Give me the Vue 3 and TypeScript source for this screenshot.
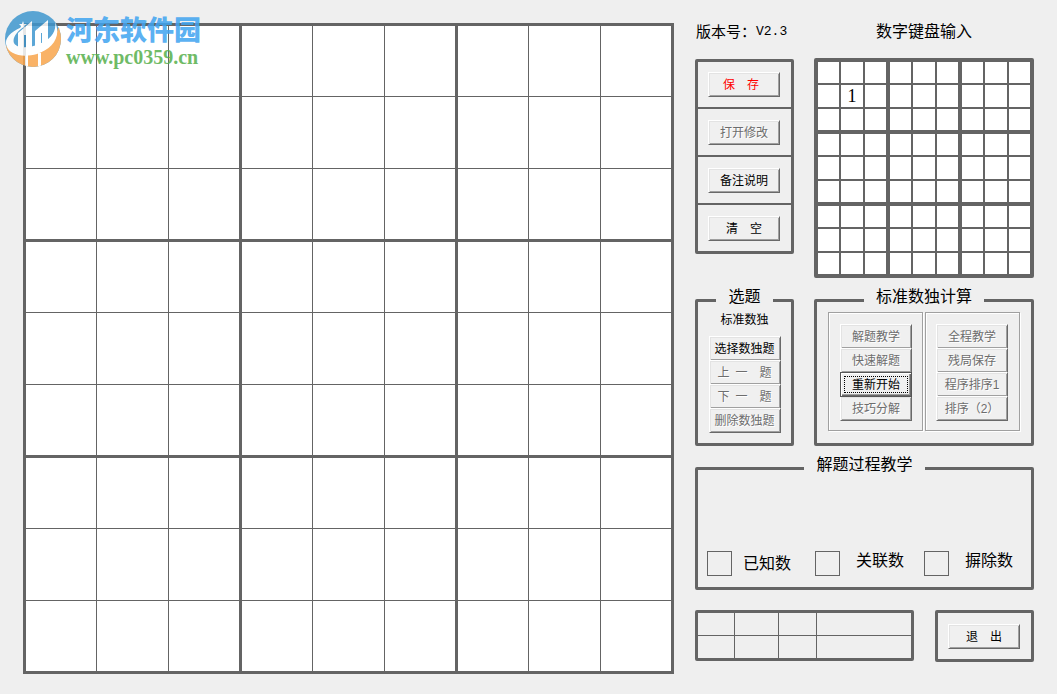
<script setup lang="ts">
import { ref } from 'vue'

interface Action {
  text: string
  disabled?: boolean
  tone?: 'danger'
  focused?: boolean
}

const nine = Array.from({ length: 9 }, (_, i) => i)

const keypad = ref<Record<string, string>>({ '0-4': '1' })

const fileActions: Action[] = [
  { text: '保\u3000存\u2002', tone: 'danger' },
  { text: '打开修改', disabled: true },
  { text: '备注说明' },
  { text: '清\u3000空' },
]

const puzzleActions: Action[] = [
  { text: '选择数独题' },
  { text: '上\u2002一\u3000题', disabled: true },
  { text: '下\u2002一\u3000题', disabled: true },
  { text: '删除数独题', disabled: true },
]

const solveGroups: Action[][] = [
  [
    { text: '解题教学', disabled: true },
    { text: '快速解题', disabled: true },
    { text: '重新开始', focused: true },
    { text: '技巧分解', disabled: true },
  ],
  [
    { text: '全程教学', disabled: true },
    { text: '残局保存', disabled: true },
    { text: '程序排序1', disabled: true },
    { text: '排序（2）', disabled: true },
  ],
]

const marks = ['已知数', '关联数', '摒除数']
</script>

<template>
  <main class="window">
    <div class="board">
      <div v-for="b in nine" :key="b" class="board-block">
        <div v-for="c in nine" :key="c" class="cell"></div>
      </div>
    </div>

    <div class="side">
      <div class="top">
        <div class="col">
          <p class="version">版本号：<span class="num">V2.3</span></p>
          <div class="menu">
            <div v-for="a in fileActions" :key="a.text" class="menu-row">
              <button type="button" class="btn" :class="a.tone" :disabled="a.disabled">{{ a.text }}</button>
            </div>
          </div>
        </div>
        <div class="col keypad-col">
          <h2 class="title">数字键盘输入</h2>
          <div class="keypad">
            <div v-for="b in nine" :key="b" class="keypad-block">
              <div v-for="c in nine" :key="c" class="cell key">{{ keypad[`${b}-${c}`] }}</div>
            </div>
          </div>
        </div>
      </div>

      <div class="groups">
        <fieldset class="panel pick">
          <legend>选题</legend>
          <p class="kind">标准数独</p>
          <div class="stack">
            <button v-for="a in puzzleActions" :key="a.text" type="button" class="btn" :disabled="a.disabled">{{ a.text }}</button>
          </div>
        </fieldset>
        <fieldset class="panel solve">
          <legend>标准数独计算</legend>
          <div class="solve-groups">
            <div v-for="(g, i) in solveGroups" :key="i" class="etched">
              <div class="stack">
                <button
                  v-for="a in g"
                  :key="a.text"
                  type="button"
                  class="btn"
                  :class="{ focused: a.focused }"
                  :disabled="a.disabled"
                >{{ a.text }}</button>
              </div>
            </div>
          </div>
        </fieldset>
      </div>

      <fieldset class="panel teach">
        <legend>解题过程教学</legend>
        <div class="marks">
          <div v-for="m in marks" :key="m" class="mark">
            <span class="swatch"></span>
            <span>{{ m }}</span>
          </div>
        </div>
      </fieldset>

      <div class="bottom">
        <table class="info">
          <colgroup>
            <col class="c1" />
            <col class="c2" />
            <col class="c3" />
            <col />
          </colgroup>
          <tbody>
            <tr v-for="r in 2" :key="r">
              <td v-for="c in 4" :key="c"></td>
            </tr>
          </tbody>
        </table>
        <div class="exit">
          <button type="button" class="btn">退&#x3000;出</button>
        </div>
      </div>
    </div>

    <div class="brand">
      <svg class="brand-mark" viewBox="0 0 56 56" width="56" height="56">
        <defs>
          <clipPath id="disc"><circle cx="28" cy="28" r="28" /></clipPath>
        </defs>
        <g clip-path="url(#disc)">
          <rect width="56" height="56" fill="#3f97cf" />
          <path d="M0 34C10 43 24 42 36 36C46 31 52 24 53 17L57 16V57H0Z" fill="#f8a54c" />
          <path d="M20 15C8 19 0 26 1 33C3 44 18 47 32 43C47 38 57 26 50 11C52 21 45 29 34 33C23 38 11 37 9 32C7 27 12 20 20 15Z" fill="#fff" />
          <path d="M13 22L27 10V38H21V24H19V39H13Z" fill="#fff" />
          <path d="M30 20L43 9V34H37V22H36V36H30Z" fill="#fff" />
          <path d="M20 44H23V57H20ZM33 42H36V57H33Z" fill="#fff" />
          <path d="M18 10L19 13L22 13L19 15L20 18L18 16L15 18L16 15L14 13L17 13Z" fill="#fff" />
        </g>
      </svg>
      <div class="brand-text">
        <span class="brand-name">河东软件园</span>
        <span class="brand-url">www.pc0359.cn</span>
      </div>
    </div>
  </main>
</template>

<style>
body {
  margin: 0;
  background: #efefef;
}
</style>

<style scoped>
.window {
  --line: #646464;
  position: relative;
  box-sizing: border-box;
  min-height: 100vh;
  padding: 23px 23px 20px;
  display: grid;
  grid-template-columns: minmax(0, 1fr) 339px;
  column-gap: 21px;
  align-items: start;
  background: #efefef;
  color: #000;
  font-family: "Liberation Sans", "Noto Sans CJK SC", sans-serif;
  font-size: 12px;
}

p,
h2 {
  margin: 0;
  font-weight: normal;
}

.board,
.keypad {
  box-sizing: border-box;
  display: grid;
  grid-template-columns: repeat(3, minmax(0, 1fr));
  grid-template-rows: repeat(3, minmax(0, 1fr));
  aspect-ratio: 1;
  background: var(--line);
}

.board {
  border: 3px solid var(--line);
  gap: 3px;
}

.keypad {
  border: 4px solid var(--line);
  border-radius: 2px;
  gap: 4px;
}

.board-block,
.keypad-block {
  display: grid;
  grid-template-columns: repeat(3, minmax(0, 1fr));
  grid-template-rows: repeat(3, minmax(0, 1fr));
  gap: 1px;
}

.keypad-block {
  gap: 2px;
}

.cell {
  background: #fff;
}

.key {
  display: flex;
  align-items: center;
  justify-content: center;
  font-family: "Liberation Serif", serif;
  font-size: 18px;
  line-height: 20px;
}

.top,
.groups {
  display: grid;
  grid-template-columns: 99px minmax(0, 1fr);
  column-gap: 20px;
}

.top {
  align-items: start;
}

.col {
  display: flex;
  flex-direction: column;
  gap: 18px;
}

.keypad-col {
  gap: 17px;
}

.version {
  display: flex;
  padding-left: 1px;
  font-size: 15px;
  line-height: 18px;
  white-space: nowrap;
}

.num {
  font-family: "Liberation Mono", monospace;
  font-size: 13px;
}

.title {
  font-size: 16px;
  line-height: 18px;
  text-align: center;
}

.menu {
  border: 3px solid var(--line);
  border-radius: 2px;
}

.menu-row {
  padding: 10px;
}

.menu-row + .menu-row {
  padding-top: 11px;
  border-top: 2px solid var(--line);
}

.btn {
  display: block;
  box-sizing: border-box;
  width: 72px;
  height: 25px;
  padding: 0;
  border: 1px solid;
  border-color: #fff #696969 #696969 #fff;
  border-radius: 0;
  background: #f0f0f0;
  box-shadow: inset 1px 1px #e3e3e3, inset -1px -1px #a0a0a0;
  color: #000;
  font: inherit;
  line-height: 16px;
  white-space: pre;
}

.btn:disabled {
  color: #6d6d6d;
  text-shadow: 1px 1px #fff;
}

.btn.danger {
  color: #f00;
}

.btn.focused {
  position: relative;
  border-color: #555;
  box-shadow: inset 1px 1px #fff, inset -1px -1px #696969, inset -2px -2px #a0a0a0;
  outline: 1px dotted #000;
  outline-offset: -5px;
}

.stack {
  display: flex;
  flex-direction: column;
  align-items: center;
}

.stack .btn + .btn {
  margin-top: -1px;
}

.groups {
  margin-top: 11px;
}

.panel {
  min-width: 0;
  margin: 0;
  padding: 0;
  border: 3px solid var(--line);
  border-radius: 2px;
}

.panel legend {
  margin: 0 auto;
  padding: 0 12px 6px;
  font-size: 16px;
  line-height: 16px;
}

.pick {
  padding: 1px 10px 10px;
}

.kind {
  margin-bottom: 8px;
  line-height: 16px;
  text-align: center;
}

.solve {
  padding: 1px 11px 12px;
}

.solve-groups {
  display: grid;
  grid-template-columns: 1fr 1fr;
  column-gap: 2px;
}

.etched {
  padding: 11px 10px 9px 11px;
  border: 1px solid #a0a0a0;
  box-shadow: inset 1px 1px #fff, 1px 1px #fff;
}

.etched + .etched {
  padding-right: 11px;
  padding-left: 10px;
}

.teach {
  margin-top: 11px;
  padding: 72px 9px 11px;
}

.marks {
  display: grid;
  grid-template-columns: 108px 109px 1fr;
}

.mark {
  display: flex;
  align-items: flex-start;
  gap: 16px;
  font-size: 16px;
  line-height: 20px;
  white-space: nowrap;
}

.mark:first-child {
  align-items: center;
  gap: 11px;
}

.swatch {
  box-sizing: border-box;
  width: 25px;
  height: 25px;
  border: 1px solid var(--line);
}

.bottom {
  margin-top: 20px;
  display: grid;
  grid-template-columns: minmax(0, 1fr) 99px;
  column-gap: 21px;
  align-items: start;
}

.info {
  width: 100%;
  table-layout: fixed;
  border-collapse: separate;
  border-spacing: 0;
  border: 3px solid var(--line);
  border-radius: 2px;
}

.info td {
  height: 22px;
  padding: 0;
  border-left: 1px solid var(--line);
}

.info td:first-child {
  border-left: 0;
}

.info tr + tr td {
  border-top: 1px solid var(--line);
}

.c1 {
  width: 36px;
}

.c2 {
  width: 44px;
}

.c3 {
  width: 38px;
}

.exit {
  padding: 11px 10px 10px;
  border: 3px solid var(--line);
  border-radius: 2px;
}

.brand {
  position: absolute;
  top: 11px;
  left: 5px;
  display: flex;
  gap: 5px;
  opacity: 0.85;
}

.brand-mark {
  display: block;
}

.brand-text {
  display: flex;
  flex-direction: column;
  white-space: nowrap;
}

.brand-name {
  font-family: "Noto Sans CJK SC", sans-serif;
  font-size: 27px;
  font-weight: 900;
  line-height: 36px;
  color: #3fa4f0;
}

.brand-url {
  font-family: "Liberation Serif", serif;
  font-size: 20px;
  font-weight: bold;
  line-height: 20px;
  color: #57b04c;
}
</style>
